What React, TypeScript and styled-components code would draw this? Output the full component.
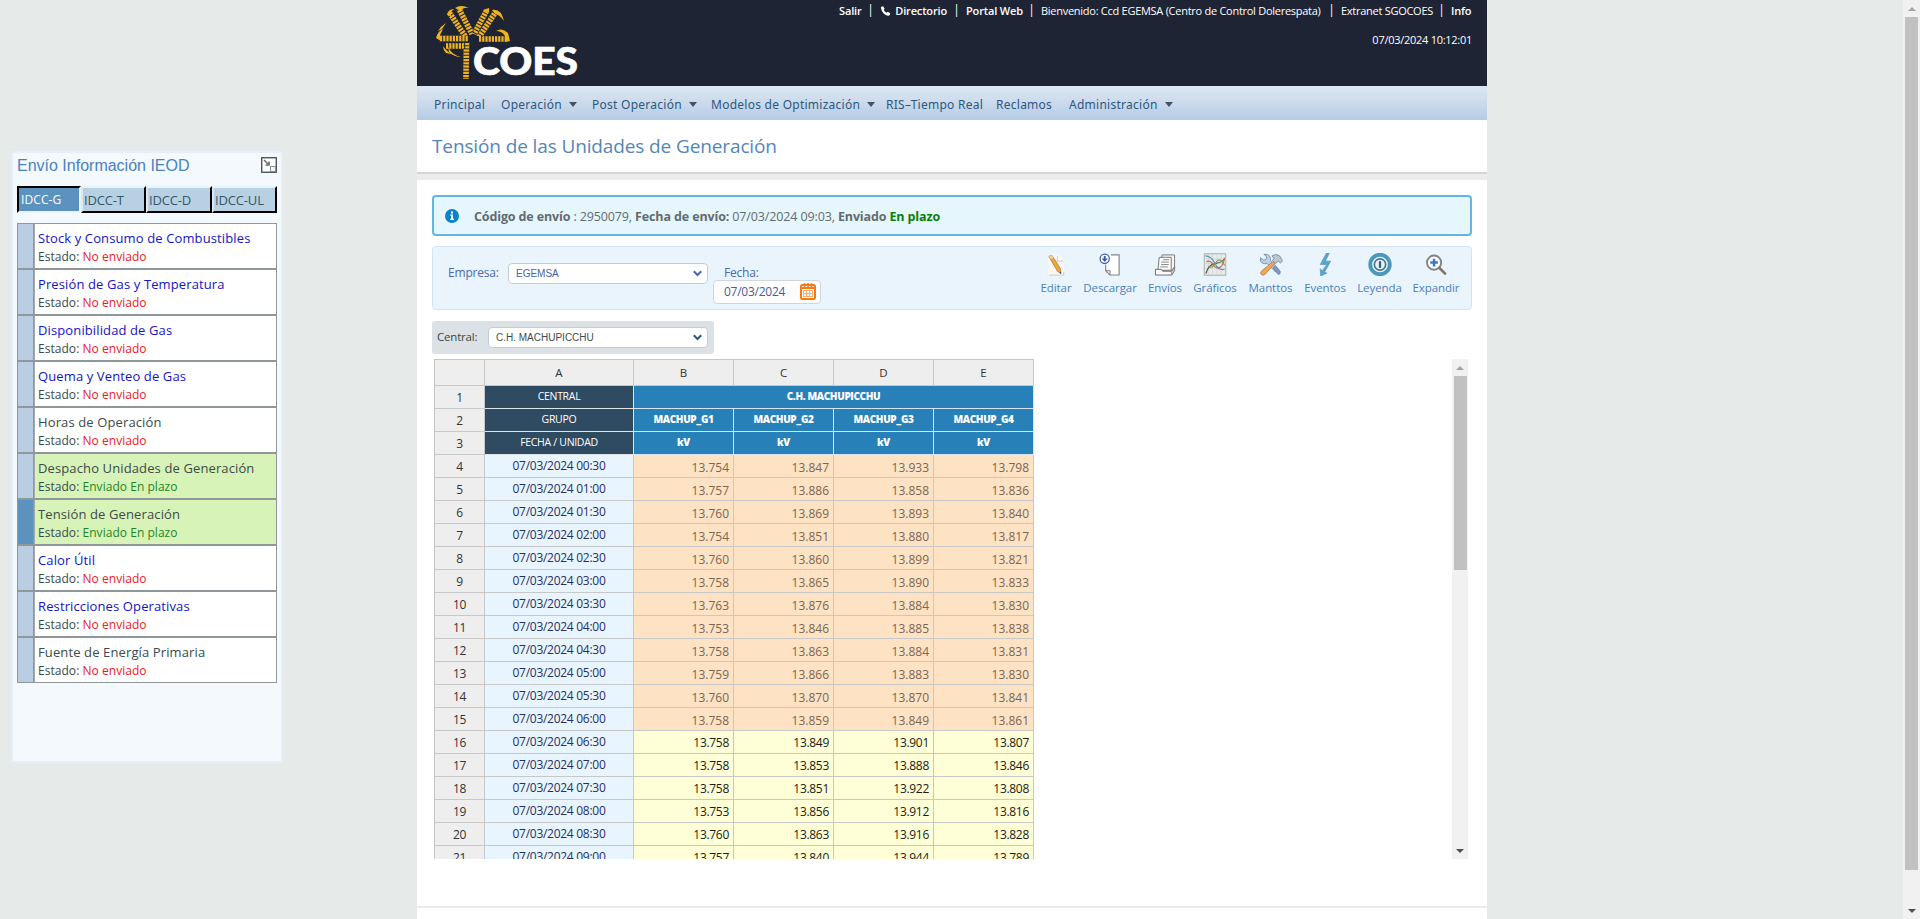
import React from 'react';
import styled, { createGlobalStyle } from 'styled-components';

const Global = createGlobalStyle`
  *, *::before, *::after { box-sizing: border-box; }
  html, body { margin: 0; padding: 0; overflow: hidden; background: #e6eae9; }
  body { font-family: 'Open Sans', 'Noto Sans', sans-serif; font-size: 12px; color: #334; }
`;

const Page = styled.div`
  display: flex;
  width: 1920px;
  height: 919px;
  overflow: hidden;
  background: #e6eae9;
`;

/* ---------- side panel ---------- */

const Side = styled.aside`
  flex: none;
  width: 417px;
  padding: 151px 0 0 11px;
`;

const Panel = styled.section`
  width: 272px;
  height: 612px;
  padding: 4px 4px 0;
  background: #f3f9fd;
  border: 2px solid #e8eef5;
  box-shadow: 0 0 0 1px #e4e9ef;
`;

const PanelHead = styled.header`
  display: flex;
  justify-content: space-between;
  height: 29px;
`;

const PanelTitle = styled.h2`
  margin: 0;
  font: 400 16px/17px 'Liberation Sans', sans-serif;
  color: #4b82bd;
  white-space: nowrap;
`;

const Tabs = styled.div`
  display: flex;
  height: 27px;
  margin-bottom: 10px;
`;

const Tab = styled.button<{ $on?: boolean; $w: number }>`
  flex: none;
  width: ${p => p.$w}px;
  height: 27px;
  padding: 0 0 0 ${p => (p.$on ? 2 : 1)}px;
  text-align: left;
  white-space: nowrap;
  font: 400 ${p => (p.$on ? 12 : 13)}px/24px 'Open Sans', sans-serif;
  letter-spacing: ${p => (p.$on ? 0.1 : -0.15)}px;
  color: ${p => (p.$on ? '#fff' : '#33566c')};
  background: ${p => (p.$on ? '#5b93be' : '#b8d1e2')};
  border: 2px solid;
  border-color: ${p => (p.$on ? '#000 #e8f3fa #e8f3fa #000' : '#e8f3fa #000 #000 #dbe8f1')};
`;

const List = styled.ul`
  margin: 0;
  padding: 0;
  list-style: none;
`;

const Item = styled.li<{ $sent?: boolean; $active?: boolean }>`
  display: flex;
  height: 46px;
  border: 1px solid #8f979b;
  background: ${p => (p.$sent ? '#d8f3b7' : '#fff')};

  &::before {
    content: '';
    flex: none;
    width: 16px;
    background: ${p => (p.$active ? '#5b93be' : '#b9cee2')};
    border-right: 1px solid #8f979b;
  }
`;

const ItemBody = styled.div`
  padding: 5px 0 0 3px;
  border-left: 1px solid #a5a9ab;
  white-space: nowrap;
`;

const ItemName = styled.div<{ $link?: boolean }>`
  font-size: 13px;
  line-height: 19px;
  letter-spacing: 0.12px;
  color: ${p => (p.$link ? '#1414c4' : '#3b4a4b')};
`;

const ItemState = styled.div`
  font-size: 12px;
  line-height: 17px;
  letter-spacing: 0.04px;
  color: #374a4c;
`;

const State = styled.span<{ $ok?: boolean }>`
  color: ${p => (p.$ok ? '#1f861f' : '#e8211c')};
`;

/* ---------- main column ---------- */

const Main = styled.main`
  flex: none;
  width: 1070px;
  height: 919px;
  background: #fff;
`;

const Header = styled.header`
  display: flex;
  justify-content: space-between;
  height: 86px;
  padding-left: 18px;
  background: #1e2434;
`;

const HeaderInfo = styled.div`
  padding: 2px 15px 0 0;
  text-align: right;
  color: #fff;
`;

const HeaderLinks = styled.nav`
  display: flex;
  height: 29px;
`;

const HeaderLink = styled.a<{ $w: number; $bold?: boolean }>`
  display: flex;
  align-items: center;
  justify-content: space-between;
  width: ${p => p.$w}px;
  height: 17px;
  font-size: 11px;
  font-weight: ${p => (p.$bold ? 600 : 500)};
  letter-spacing: ${p => (p.$bold ? -0.15 : -0.27)}px;
  white-space: nowrap;
`;

const Bar = styled.span`
  width: 19px;
  height: 18px;
  line-height: 16px;
  text-align: center;
  font-size: 12px;
`;

const Clock = styled.div`
  font-size: 11px;
  font-weight: 500;
  line-height: 18px;
  letter-spacing: -0.27px;
`;

const Menu = styled.nav`
  display: flex;
  height: 34px;
  padding-left: 17px;
  background: linear-gradient(#dce7f2, #c7d7ea 60%, #b7cde8 92%, #bccbdc);
`;

const MenuItem = styled.a<{ $w: number }>`
  display: flex;
  align-items: center;
  gap: 7px;
  flex: none;
  width: ${p => p.$w}px;
  height: 36px;
  font: 400 12px 'Noto Sans', sans-serif;
  letter-spacing: 0.26px;
  color: #2c5880;
  white-space: nowrap;
`;

const Caret = styled.i`
  border: 4px solid transparent;
  border-top: 5px solid #3d5468;
  border-bottom: 0;
`;

const TitleBar = styled.div`
  height: 60px;
  padding: 11px 0 0 15px;
  border-bottom: 6px solid #ececec;
  box-shadow: inset 0 -2px #d6d6d6;
`;

const Title = styled.h1`
  margin: 0;
  font-size: 19px;
  font-weight: 400;
  line-height: 30px;
  letter-spacing: -0.12px;
  color: #5486b9;
  white-space: nowrap;
`;

const Content = styled.div`
  height: 728px;
  padding: 15px 15px 0;
  border-bottom: 2px solid #ebebeb;
`;

const Notice = styled.div`
  display: flex;
  align-items: center;
  gap: 15px;
  height: 41px;
  padding: 1px 0 0 11px;
  border: 2px solid #62b6e6;
  border-radius: 4px;
  background: #e6f6fd;
  color: #626b70;
  font-size: 12.5px;
  letter-spacing: -0.13px;
  white-space: nowrap;

  em { font-style: normal; font-weight: 700; color: #078007; }
`;

const Filters = styled.div`
  display: flex;
  justify-content: space-between;
  height: 64px;
  margin-top: 10px;
  border: 1px solid #d3e5f2;
  border-radius: 4px;
  background: #eaf4fc;
`;

const FilterFields = styled.div`
  display: flex;
  padding: 16px 0 0 15px;
`;

const Label = styled.label<{ $w: number }>`
  width: ${p => p.$w}px;
  font-size: 12px;
  line-height: 20px;
  letter-spacing: -0.2px;
  color: #4a68b5;
  white-space: nowrap;
`;

const SelectBox = styled.div<{ $w: number; $ink: string }>`
  display: flex;
  align-items: center;
  justify-content: space-between;
  width: ${p => p.$w}px;
  height: 21px;
  padding: 0 5px 0 7px;
  border: 1px solid #c3cdd6;
  border-radius: 4px;
  background: #fff;
  font: 400 10px 'Liberation Sans', sans-serif;
  color: ${p => p.$ink};
`;

const DateField = styled.div`
  width: 108px;
  margin-left: 5px;
`;

const DateBox = styled.div`
  display: flex;
  align-items: center;
  justify-content: space-between;
  height: 24px;
  margin-top: -3px;
  padding: 0 4px 1px 10px;
  border: 1px solid #cfd6dc;
  border-radius: 4px;
  background: #fcfcfd;
  color: #4a5c99;
  font-size: 12px;
  letter-spacing: -0.25px;
`;

const DateLabel = styled(Label)`
  display: block;
  margin-left: 11px;
`;

const Tools = styled.div`
  display: flex;
  padding: 6px 6px 0 0;
`;

const Tool = styled.button<{ $w: number }>`
  display: flex;
  flex-direction: column;
  align-items: center;
  width: ${p => p.$w}px;
  height: 46px;
  padding: 0;
  border: 0;
  background: none;
  font: 400 11.5px/23px 'Open Sans', sans-serif;
  letter-spacing: -0.08px;
  color: #4a80bd;
  white-space: nowrap;
`;

const Central = styled.div`
  display: flex;
  width: 282px;
  height: 33px;
  margin-top: 11px;
  padding: 6px 0 0 5px;
  border-radius: 3px;
  background: #dbe1e5;
`;

const CentralLabel = styled(Label)`
  font-size: 11.5px;
  color: #3b4548;
`;

const Sheet = styled.div`
  display: flex;
  justify-content: space-between;
  height: 500px;
  margin-top: 5px;
  padding: 0 4px 0 2px;
`;

const SheetView = styled.div`
  height: 500px;
  overflow: hidden;
`;

const Grid = styled.div`
  display: grid;
  grid-template-columns: 50px 149px repeat(4, 100px);
  grid-auto-rows: 23px;
  grid-template-rows: 26px;
  border-left: 1px solid #c6c6c6;
  border-top: 1px solid #c6c6c6;
`;

const Cell = styled.div`
  border-right: 1px solid #c8c8c8;
  border-bottom: 1px solid #c8c8c8;
  text-align: center;
  line-height: 23px;
  white-space: nowrap;
  overflow: hidden;
`;

const HeadCell = styled(Cell)`
  background: #eee;
  color: #333;
  font-size: 11.5px;
  line-height: 25px;
`;

const NumCell = styled(Cell)`
  background: #eee;
  color: #333;
  font-size: 12px;
  letter-spacing: -0.3px;
`;

const DarkCell = styled(Cell)`
  background: #2f4b61;
  color: #fff;
  font-size: 10.5px;
  line-height: 21px;
  letter-spacing: -0.3px;
  border-color: #dfe6ea;
`;

const BlueCell = styled(Cell)<{ $span?: number }>`
  grid-column: span ${p => p.$span ?? 1};
  background: #2880b9;
  color: #fff;
  font-size: 10px;
  font-weight: 800;
  line-height: 21px;
  letter-spacing: -0.35px;
  border-color: #d5e6f1;
`;

const TimeCell = styled(Cell)`
  background: #e8f5fe;
  color: #262f66;
  font-size: 12px;
  line-height: 22px;
  letter-spacing: -0.28px;
`;

const ValueCell = styled(Cell)<{ $locked: boolean }>`
  padding-right: 4px;
  text-align: right;
  font-size: 12px;
  line-height: ${p => (p.$locked ? 25 : 23)}px;
  letter-spacing: ${p => (p.$locked ? 0 : -0.3)}px;
  color: ${p => (p.$locked ? '#7a6653' : '#1c1c14')};
  background: ${p => (p.$locked ? '#fee2c4' : '#feffd6')};
`;

/* ---------- scrollbars ---------- */

const Track = styled.div<{ $h: number }>`
  display: flex;
  flex-direction: column;
  align-items: center;
  flex: none;
  width: 16px;
  height: ${p => p.$h}px;
  background: #f1f1f1;
`;

const Thumb = styled.div<{ $h: number }>`
  width: 13px;
  height: ${p => p.$h}px;
  background: #c1c1c1;
`;

const Arrow = styled.div<{ $down?: boolean }>`
  display: flex;
  align-items: center;
  height: 17px;
  margin-top: ${p => (p.$down ? 'auto' : '0')};

  &::before {
    content: '';
    border: 4px solid transparent;
    ${p => (p.$down ? 'border-top-color: #505050; border-bottom: 0;' : 'border-bottom-color: #a3a3a3; border-top: 0;')}
  }
`;

const PageTrack = styled(Track)`
  width: 17px;
  margin-left: auto;
`;

/* ---------- drawings ---------- */

const ropes = [
  'M33 12 L49 36',
  'M43 9 L56 34',
  'M71 10 L58 34',
  'M79 13 L63 37',
  'M23 38.5 L52 38.5',
  'M62 39 L91 39',
  'M29 46 L50 46',
  'M50.500 42 L50 79',
];

const Logo = () => (
  <svg width="150" height="86" viewBox="0 0 150 86">
    <g fill="none" transform="translate(-19 0)">
      <g stroke="#f1b420" strokeWidth="5.6">
        {ropes.map(d => <path key={d} d={d} />)}
      </g>
      <g stroke="#1e2434" strokeWidth="6" strokeDasharray="1 2.2">
        {ropes.map(d => <path key={d} d={d} />)}
      </g>
      <g fill="#f1b420">
        <path d="M31 15Q32 9 38 9L35 12 35 16Z" />
        <path d="M39 8Q45 4 53 8 47 7 45 11Z" />
        <path d="M67 10 73 8 73 12Z" />
        <path d="M76 10Q85 8 88 21 83 14 79 14Z" />
        <path d="M20 38Q22 31 27 29L24 35 25 41Z" />
        <path d="M22 31Q25 26 30 23L26 29Z" />
        <path d="M80 31Q86 27 92 33L94 41 89 42 89 36Q86 31 80 31Z" />
        <path d="M27 46Q31 53 40 55L30 53Q27 50 27 46Z" />
        <path d="M32 47Q36 55 45 57 38 57 33 52Z" />
      </g>
    </g>
    <text x="38" y="74.500" fill="#fff" stroke="#fff" strokeWidth=".7" fontFamily="Lato, sans-serif" fontWeight="900" fontSize="37.500" textLength="105" lengthAdjust="spacingAndGlyphs">COES</text>
  </svg>
);

const Phone = () => (
  <svg width="11" height="10" viewBox="0 0 10 10">
    <path d="M.4 1 2.600.3 4.200 2.800 3.200 3.800Q4 5.600 6.200 6.800L7.200 5.800 9.800 7.300 9.200 9.300Q7.500 10.300 4.800 8.700.6 6 .4 1Z" fill="#fff" />
  </svg>
);

const Collapse = () => (
  <svg width="16" height="16" viewBox="0 0 16 16" fill="none">
    <rect x=".75" y=".75" width="14.5" height="14.5" fill="#fff" stroke="#2f3a42" strokeWidth="1.2" />
    <path d="M3 3l5 5M8 4.500V8H4.500" stroke="#6f7478" strokeWidth="1.7" />
    <rect x="9.500" y="9.500" width="5" height="5" stroke="#8b9094" fill="#f5f5f5" />
  </svg>
);

const InfoIcon = () => (
  <svg width="14" height="14" viewBox="0 0 14 14">
    <circle cx="7" cy="7" r="7" fill="#0b83c7" />
    <path d="M6 2.500h2v2H6zM5.300 5.600H8V9.800h.9V11H5.200V9.800h.9V6.800h-.8z" fill="#fff" />
  </svg>
);

const Chevron = ({ color }: { color: string }) => (
  <svg width="9" height="7" viewBox="0 0 9 7">
    <path d="M.8 1.200 4.500 5 8.200 1.200" fill="none" stroke={color} strokeWidth="2" />
  </svg>
);

const Calendar = () => (
  <svg width="16" height="17" viewBox="0 0 16 17">
    <rect x="1" y="2" width="14" height="14" rx="1.500" fill="#fff" stroke="#f57c14" strokeWidth="2" />
    <path d="M1 5H15" stroke="#f57c14" strokeWidth="2" />
    <path d="M4.500 0V4M8 0V4M11.500 0V4" stroke="#f57c14" strokeWidth="1.500" />
    <path d="M3.500 7.500v6.500M6.500 7.500v6.500M9.500 7.500v6.500M12.500 7.500v6.500M3.500 7.500h9M3.500 10.500h9M3.500 13.500h9" stroke="#f9a45c" strokeWidth=".9" />
  </svg>
);

const icons: Record<string, React.ReactNode> = {
  Editar: (
    <>
      <path d="M4 1h10l6 6v16H4z" fill="#f9f8f5" />
      <path d="M13.500 3v5.500h6M20 20v3H5" fill="none" stroke="#d3d3d0" strokeWidth="1.300" />
      <path d="M4.500 3.500 7.500 2.200 16.500 16 17.200 21.500 13.500 19z" fill="#f0a63c" stroke="#ad7434" strokeWidth=".8" />
      <path d="M4.500 3.500 7.500 2.200l1.800 2.800-2.600 1.600z" fill="#e9d3bc" />
      <path d="M15.500 20.300 17.200 21.800 17 19.400z" fill="#444" />
    </>
  ),
  Descargar: (
    <>
      <path d="M12 2H21.500V23H12L7.500 18.500V11" fill="#fff" />
      <path d="M13 2H21.500V23H12L7.500 18.500V12" fill="none" stroke="#858585" strokeWidth="1.200" />
      <path d="M7.500 18.500H12V23" fill="none" stroke="#777" />
      <circle cx="6.500" cy="6" r="4.800" fill="#fff" stroke="#3b5da7" strokeWidth="1.300" />
      <path d="M6.500 3V8" stroke="#3b5da7" strokeWidth="2" />
      <path d="M3.300 5.700H9.700L6.500 9.300z" fill="#3b5da7" />
    </>
  ),
  'Envíos': (
    <>
      <path d="M9 2H22V15L18 19H7Z" fill="#f4f4f4" stroke="#777" />
      <path d="M6 4.500H18.500V18H4.500Z" fill="#fafafa" stroke="#777" />
      <path d="M10 7h6.500M8 9.500h8M8 12h8M7 14.500h8" stroke="#888" />
      <path d="M2 17H8L9.500 19H19V23H2z" fill="#f9f9f9" stroke="#6d6d6d" />
      <path d="M19 19 22 14V18.500L19 23" fill="#ccc" stroke="#777" />
    </>
  ),
  'Gráficos': (
    <>
      <rect x=".8" y=".8" width="22.400" height="22.400" fill="#e8ebe9" stroke="#a9adad" />
      <path d="M5 1v22M9.500 1v22M14 1v22M18.500 1v22M1 6h22M1 11h22M1 16h22" stroke="#ccd2d2" strokeWidth=".7" />
      <path d="M2.500 21.500Q5 12 12 11T22 6" fill="none" stroke="#54504a" strokeWidth="1.300" />
      <path d="M2 3Q8 3 12 11T22 17" fill="none" stroke="#5a93bd" strokeWidth="1.200" />
      <path d="M3 9Q7 7 10 12T17 15 22 5" fill="none" stroke="#c86a4e" strokeWidth="1.200" />
      <path d="M5 14Q9 17 13 10T22 13" fill="none" stroke="#6fa35a" strokeWidth="1.200" />
    </>
  ),
  Manttos: (
    <>
      <path d="M1 5 4.500 7.500 7.500 6 7 3 4.500 1.500Q9 .5 11 4L11.500 8 20 17 17 20 8 11Q3 12 1 8.500z" fill="#bcd0e3" stroke="#6382a0" strokeWidth=".8" />
      <path d="M13 3Q17 0 21 3L24 8 22 10.500 19.500 8.500 17 11 13.500 8 15 5.500z" fill="#b8c8d4" stroke="#6f8292" strokeWidth=".8" />
      <path d="M14 9 16 11 6 22Q4 24 2 22.500T2.500 18.500z" fill="#efa858" stroke="#b57433" strokeWidth=".8" />
      <path d="M14 15.500 16.500 13.500 21.500 19Q22.500 22 19.500 22.500z" fill="#8097cb" stroke="#5f76a6" strokeWidth=".7" />
    </>
  ),
  Eventos: (
    <path d="M13.500 0 7 12H14L9 18.500 7 16.500 7.500 24 14 21 11.500 20 18 8.500H12.500L16.500 0z" fill="#57a5cd" stroke="#478fb5" strokeWidth=".6" />
  ),
  Leyenda: (
    <>
      <circle cx="12" cy="12" r="10.200" fill="#e9f2f7" stroke="#4a98bc" strokeWidth="4" />
      <circle cx="12" cy="12" r="5.900" fill="none" stroke="#45758c" strokeWidth="1.700" />
      <path d="M12 8.500v7" stroke="#36647b" strokeWidth="2.400" />
    </>
  ),
  Expandir: (
    <>
      <circle cx="10" cy="10" r="7.400" fill="#fff" stroke="#7f8587" strokeWidth="2" />
      <path d="M10 6v8M6 10h8" stroke="#3f78c4" strokeWidth="2.600" />
      <path d="M15.500 15.500 21.500 21.500" stroke="#84736a" strokeWidth="2.800" strokeLinecap="round" />
    </>
  ),
};

/* ---------- data ---------- */

const forms: { name: string; link?: boolean; sent?: boolean; active?: boolean }[] = [
  { name: 'Stock y Consumo de Combustibles', link: true },
  { name: 'Presión de Gas y Temperatura', link: true },
  { name: 'Disponibilidad de Gas', link: true },
  { name: 'Quema y Venteo de Gas', link: true },
  { name: 'Horas de Operación' },
  { name: 'Despacho Unidades de Generación', sent: true },
  { name: 'Tensión de Generación', sent: true, active: true },
  { name: 'Calor Útil', link: true },
  { name: 'Restricciones Operativas', link: true },
  { name: 'Fuente de Energía Primaria' },
];

const menu: { name: string; w: number; drop?: boolean }[] = [
  { name: 'Principal', w: 67 },
  { name: 'Operación', w: 91, drop: true },
  { name: 'Post Operación', w: 119, drop: true },
  { name: 'Modelos de Optimización', w: 175, drop: true },
  { name: 'RIS–Tiempo Real', w: 110 },
  { name: 'Reclamos', w: 73 },
  { name: 'Administración', w: 110, drop: true },
];

const tools: [string, number][] = [
  ['Editar', 42], ['Descargar', 66], ['Envíos', 44], ['Gráficos', 56],
  ['Manttos', 55], ['Eventos', 54], ['Leyenda', 55], ['Expandir', 58],
];

const readings = [
  ['00:30', '13.754', '13.847', '13.933', '13.798'],
  ['01:00', '13.757', '13.886', '13.858', '13.836'],
  ['01:30', '13.760', '13.869', '13.893', '13.840'],
  ['02:00', '13.754', '13.851', '13.880', '13.817'],
  ['02:30', '13.760', '13.860', '13.899', '13.821'],
  ['03:00', '13.758', '13.865', '13.890', '13.833'],
  ['03:30', '13.763', '13.876', '13.884', '13.830'],
  ['04:00', '13.753', '13.846', '13.885', '13.838'],
  ['04:30', '13.758', '13.863', '13.884', '13.831'],
  ['05:00', '13.759', '13.866', '13.883', '13.830'],
  ['05:30', '13.760', '13.870', '13.870', '13.841'],
  ['06:00', '13.758', '13.859', '13.849', '13.861'],
  ['06:30', '13.758', '13.849', '13.901', '13.807'],
  ['07:00', '13.758', '13.853', '13.888', '13.846'],
  ['07:30', '13.758', '13.851', '13.922', '13.808'],
  ['08:00', '13.753', '13.856', '13.912', '13.816'],
  ['08:30', '13.760', '13.863', '13.916', '13.828'],
  ['09:00', '13.757', '13.840', '13.944', '13.789'],
];

const LOCKED_ROWS = 12;
const units = ['MACHUP_G1', 'MACHUP_G2', 'MACHUP_G3', 'MACHUP_G4'];

const SidePanel = () => (
  <Side>
    <Panel>
      <PanelHead>
        <PanelTitle>Envío Información IEOD</PanelTitle>
        <Collapse />
      </PanelHead>
      <Tabs>
        <Tab $on $w={64}>IDCC-G</Tab>
        <Tab $w={65}>IDCC-T</Tab>
        <Tab $w={66}>IDCC-D</Tab>
        <Tab $w={65}>IDCC-UL</Tab>
      </Tabs>
      <List>
        {forms.map(f => (
          <Item key={f.name} $sent={f.sent} $active={f.active}>
            <ItemBody>
              <ItemName $link={f.link}>{f.name}</ItemName>
              <ItemState>
                Estado: <State $ok={f.sent}>{f.sent ? 'Enviado En plazo' : 'No enviado'}</State>
              </ItemState>
            </ItemBody>
          </Item>
        ))}
      </List>
    </Panel>
  </Side>
);

const Spreadsheet = () => (
  <Grid>
    {['', 'A', 'B', 'C', 'D', 'E'].map(h => <HeadCell key={h}>{h}</HeadCell>)}
    <NumCell>1</NumCell>
    <DarkCell>CENTRAL</DarkCell>
    <BlueCell $span={4}>C.H. MACHUPICCHU</BlueCell>
    <NumCell>2</NumCell>
    <DarkCell>GRUPO</DarkCell>
    {units.map(u => <BlueCell key={u}>{u}</BlueCell>)}
    <NumCell>3</NumCell>
    <DarkCell>FECHA / UNIDAD</DarkCell>
    {units.map(u => <BlueCell key={u}>kV</BlueCell>)}
    {readings.map(([time, ...values], i) => (
      <React.Fragment key={time}>
        <NumCell>{i + 4}</NumCell>
        <TimeCell>07/03/2024 {time}</TimeCell>
        {values.map((v, j) => <ValueCell key={j} $locked={i < LOCKED_ROWS}>{v}</ValueCell>)}
      </React.Fragment>
    ))}
  </Grid>
);

export default function App() {
  return (
    <Page>
      <Global />
      <SidePanel />
      <Main>
        <Header>
          <Logo />
          <HeaderInfo>
            <HeaderLinks>
              <HeaderLink $w={22} $bold>Salir</HeaderLink>
              <Bar>|</Bar>
              <HeaderLink $w={67} $bold><Phone />Directorio</HeaderLink>
              <Bar>|</Bar>
              <HeaderLink $w={56} $bold>Portal Web</HeaderLink>
              <Bar>|</Bar>
              <HeaderLink $w={281}>Bienvenido: Ccd EGEMSA (Centro de Control Dolerespata)</HeaderLink>
              <Bar>|</Bar>
              <HeaderLink $w={91}>Extranet SGOCOES</HeaderLink>
              <Bar>|</Bar>
              <HeaderLink $w={21} $bold>Info</HeaderLink>
            </HeaderLinks>
            <Clock>07/03/2024 10:12:01</Clock>
          </HeaderInfo>
        </Header>
        <Menu>
          {menu.map(m => (
            <MenuItem key={m.name} $w={m.w}>{m.name}{m.drop && <Caret />}</MenuItem>
          ))}
        </Menu>
        <TitleBar>
          <Title>Tensión de las Unidades de Generación</Title>
        </TitleBar>
        <Content>
          <Notice>
            <InfoIcon />
            <span>
              <b>Código de envío</b> : 2950079, <b>Fecha de envío:</b> 07/03/2024 09:03, <b>Enviado</b> <em>En plazo</em>
            </span>
          </Notice>
          <Filters>
            <FilterFields>
              <Label $w={60}>Empresa:</Label>
              <SelectBox $w={200} $ink="#4a62a8">EGEMSA<Chevron color="#4669a5" /></SelectBox>
              <DateField>
                <DateLabel $w={40}>Fecha:</DateLabel>
                <DateBox>07/03/2024<Calendar /></DateBox>
              </DateField>
            </FilterFields>
            <Tools>
              {tools.map(([name, w]) => (
                <Tool key={name} $w={w}>
                  <svg width="24" height="24" viewBox="0 0 24 24">{icons[name]}</svg>
                  {name}
                </Tool>
              ))}
            </Tools>
          </Filters>
          <Central>
            <CentralLabel $w={51}>Central:</CentralLabel>
            <SelectBox $w={220} $ink="#3e4a52">C.H. MACHUPICCHU<Chevron color="#2f5876" /></SelectBox>
          </Central>
          <Sheet>
            <SheetView>
              <Spreadsheet />
            </SheetView>
            <Track $h={500}>
              <Arrow />
              <Thumb $h={194} />
              <Arrow $down />
            </Track>
          </Sheet>
        </Content>
      </Main>
      <PageTrack $h={919}>
        <Arrow />
        <Thumb $h={853} />
        <Arrow $down />
      </PageTrack>
    </Page>
  );
}
